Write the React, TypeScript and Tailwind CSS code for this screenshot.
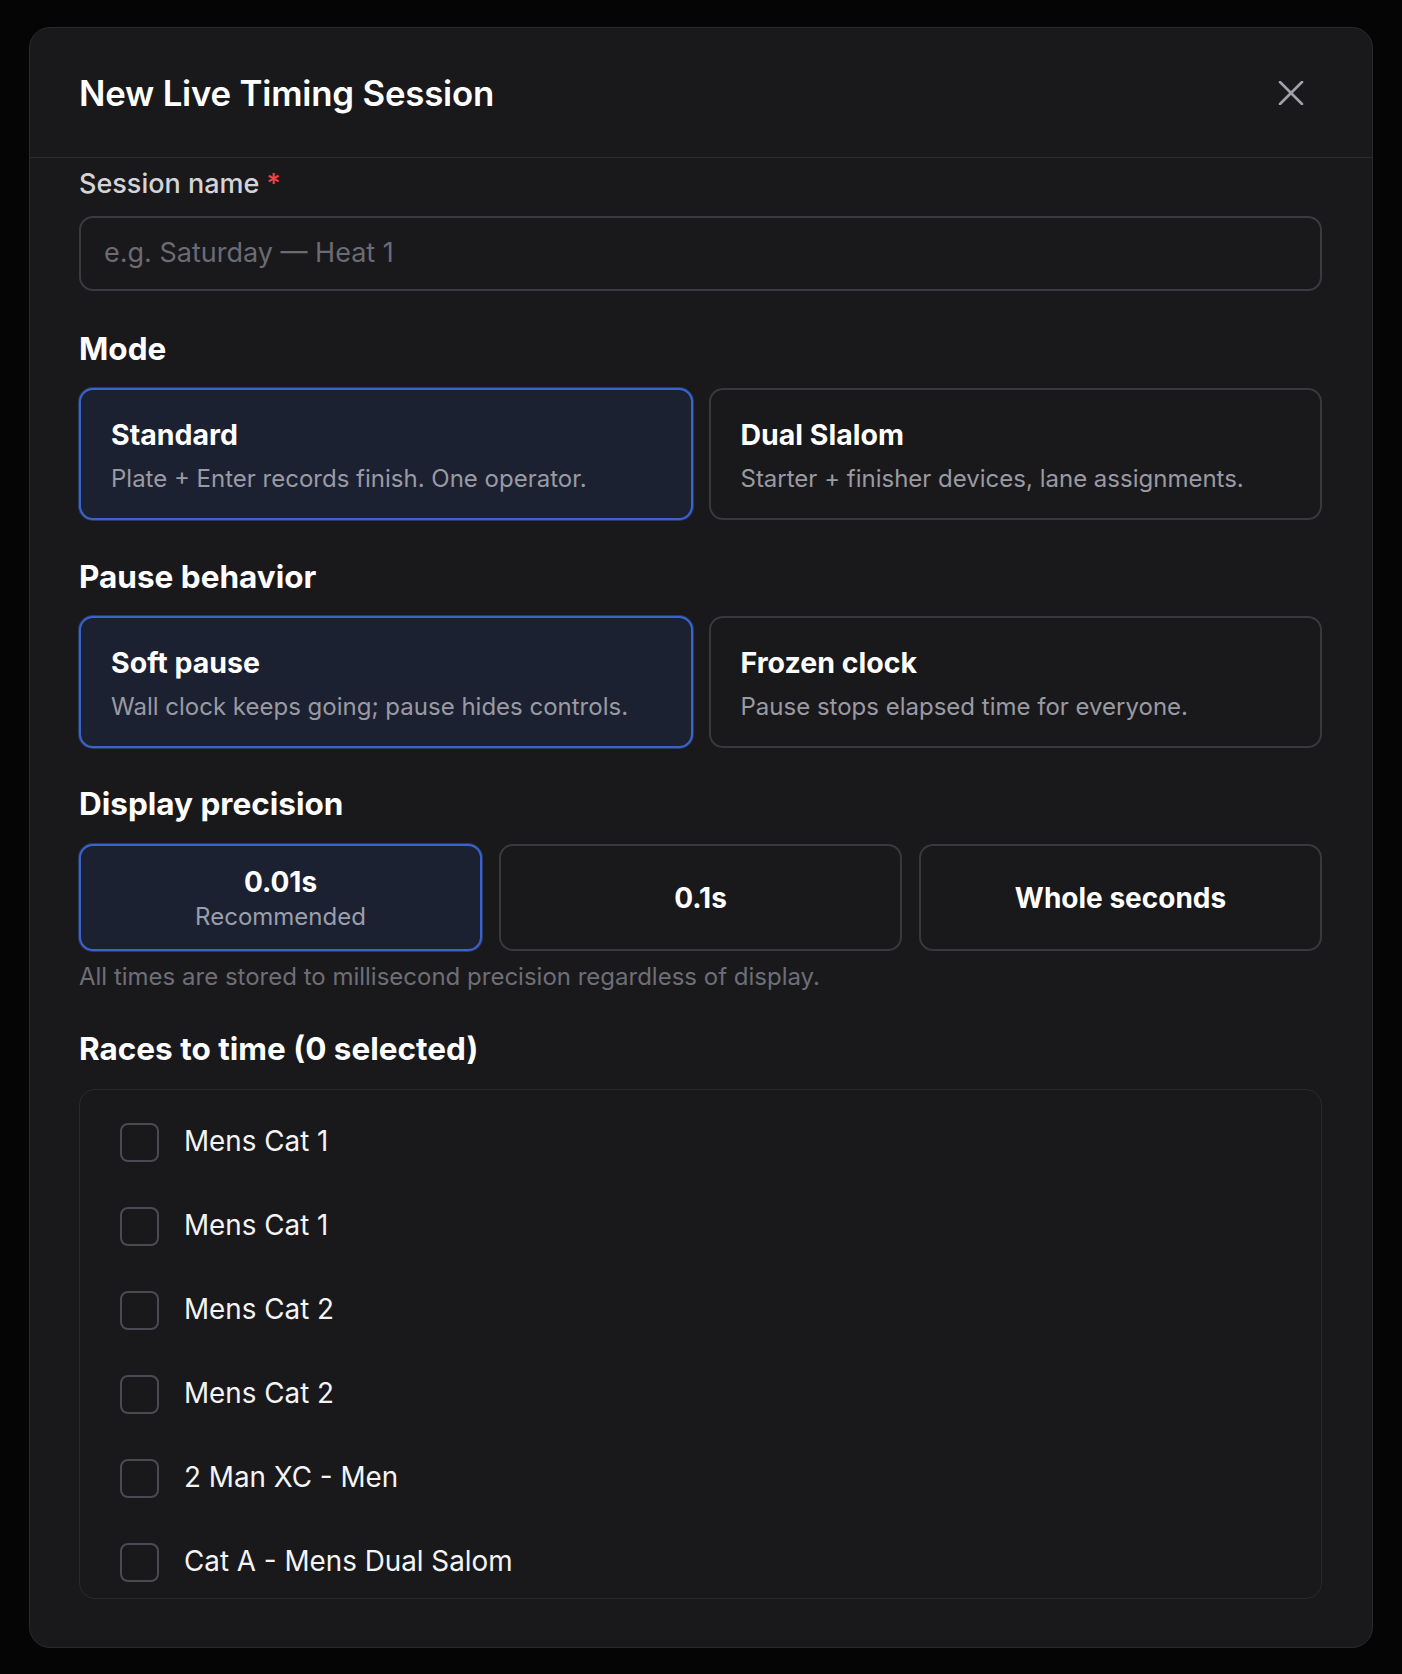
import React from "react";

const font = { fontFamily: "Inter, 'Noto Sans', 'Liberation Sans', sans-serif" };

function OptionCard({ title, desc, selected }: { title: string; desc: string; selected?: boolean }) {
  return (
    <div
      className={
        selected
          ? "h-[132px] rounded-[14px] border-2 border-[#3b63c9] bg-[#1c2131] shadow-[0_0_0_1px_rgba(59,99,201,0.45)] px-[30px] pt-[3px] flex flex-col justify-center gap-[10px]"
          : "h-[132px] rounded-[14px] border-2 border-[#38383e] bg-transparent px-[30px] pt-[3px] flex flex-col justify-center gap-[10px]"
      }
    >
      <div className="text-[28.5px] leading-[36px] font-bold text-white">{title}</div>
      <div className="text-[24px] leading-[32px] text-[#9a9aa3]">{desc}</div>
    </div>
  );
}

function PrecisionCard({ label, sub, selected }: { label: string; sub?: string; selected?: boolean }) {
  return (
    <div
      className={
        selected
          ? "h-[107px] rounded-[14px] border-2 border-[#3b63c9] bg-[#1c2131] shadow-[0_0_0_1px_rgba(59,99,201,0.45)] flex flex-col items-center justify-center gap-[4px] pt-[3px]"
          : "h-[107px] rounded-[14px] border-2 border-[#38383e] flex flex-col items-center justify-center"
      }
    >
      <div className="text-[28px] leading-[32px] font-bold text-white">{label}</div>
      {sub && <div className="text-[24px] leading-[30px] text-[#9a9eab]">{sub}</div>}
    </div>
  );
}

function Heading({ children }: { children: React.ReactNode }) {
  return <div className="text-[31.5px] leading-[36px] font-bold text-white">{children}</div>;
}

const races = [
  "Mens Cat 1",
  "Mens Cat 1",
  "Mens Cat 2",
  "Mens Cat 2",
  "2 Man XC - Men",
  "Cat A - Mens Dual Salom",
];

export default function App() {
  return (
    <div className="min-h-[1674px] w-full bg-[#050505] pt-[27px] pb-[26px] px-[29px]" style={font}>
      <div className="h-[1621px] w-full rounded-[21px] border border-[#2a2a2e] bg-[#19191c] overflow-hidden flex flex-col">
        <div className="h-[130px] shrink-0 border-b border-[#2c2c30] pl-[49px] pr-[50px] flex items-center justify-between">
          <h2 className="text-[34.8px] leading-[44px] font-semibold text-white tracking-[-0.2px]">New Live Timing Session</h2>
          <button className="w-[62px] h-[62px] flex items-center justify-center text-[#a1a1aa]">
            <svg width="26" height="24" viewBox="0 0 26 24" fill="none" stroke="currentColor" strokeWidth="2.6" strokeLinecap="round">
              <path d="M2 1 L24 23" />
              <path d="M24 1 L2 23" />
            </svg>
          </button>
        </div>

        <div className="flex-1 pl-[49px] pr-[50px] pt-[8px] flex flex-col">
          <label className="text-[27px] leading-[36px] font-medium text-[#d4d4d8]">
            Session name <span className="text-[#ef4444]">*</span>
          </label>
          <div className="mt-[14px] h-[75px] rounded-[14px] border-2 border-[#3a3a40] flex items-center pl-[23px]">
            <span className="text-[27px] text-[#6b6b74]">e.g. Saturday — Heat 1</span>
          </div>

          <div className="mt-[40px]">
            <Heading>Mode</Heading>
          </div>
          <div className="mt-[21px] grid grid-cols-2 gap-[16px]">
            <OptionCard selected title="Standard" desc="Plate + Enter records finish. One operator." />
            <OptionCard title="Dual Slalom" desc="Starter + finisher devices, lane assignments." />
          </div>

          <div className="mt-[39px]">
            <Heading>Pause behavior</Heading>
          </div>
          <div className="mt-[21px] grid grid-cols-2 gap-[16px]">
            <OptionCard selected title="Soft pause" desc="Wall clock keeps going; pause hides controls." />
            <OptionCard title="Frozen clock" desc="Pause stops elapsed time for everyone." />
          </div>

          <div className="mt-[38px]">
            <Heading>Display precision</Heading>
          </div>
          <div className="mt-[22px] grid grid-cols-3 gap-[17px]">
            <PrecisionCard selected label="0.01s" sub="Recommended" />
            <PrecisionCard label="0.1s" />
            <PrecisionCard label="Whole seconds" />
          </div>
          <div className="mt-[11px] text-[24px] leading-[30px] text-[#6e6e77]">
            All times are stored to millisecond precision regardless of display.
          </div>

          <div className="mt-[39px]">
            <Heading>Races to time (0 selected)</Heading>
          </div>
          <div className="mt-[22px] h-[510px] rounded-[16px] border border-[#2a2a2e] overflow-hidden pt-[10px] pl-[40px]">
            {races.map((r, i) => (
              <div key={i} className="h-[84px] flex items-center gap-[25px]">
                <div className="w-[39px] h-[39px] rounded-[8px] border-2 border-[#4a4a52] shrink-0" />
                <span className="text-[27.8px] text-[#f4f4f5]">{r}</span>
              </div>
            ))}
          </div>
        </div>
      </div>
    </div>
  );
}
